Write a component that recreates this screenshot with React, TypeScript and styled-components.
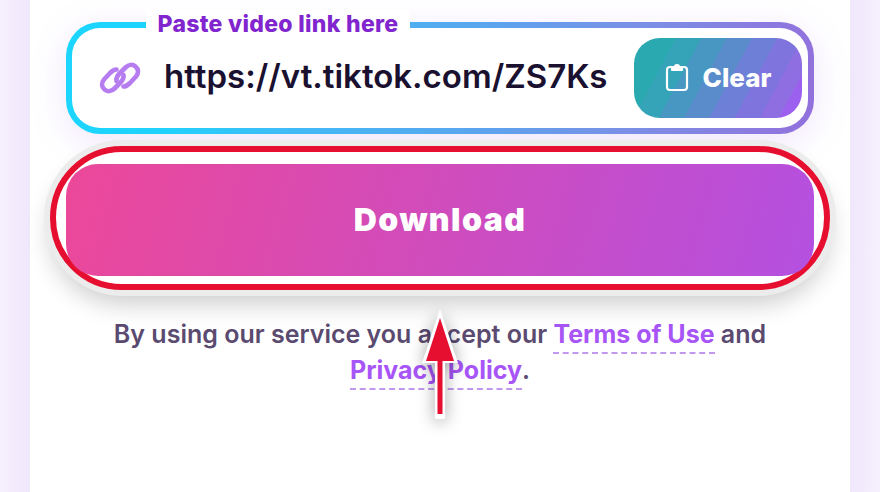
import React from "react";
import styled, { createGlobalStyle } from "styled-components";

const Global = createGlobalStyle`
  html, body { margin: 0; padding: 0; height: 100%; overflow: hidden; }
  body { background: #f4edfe; font-family: Inter, "Noto Sans", sans-serif; }
  * { box-sizing: border-box; }
`;

const Page = styled.div`
  width: 880px;
  height: 492px;
  padding: 0 30px;
  overflow: hidden;
  background: linear-gradient(to right, #f6f0fe 0, #f0e7fc 30px, #f0e7fc 850px, #f6f0fe 880px);
`;

const Panel = styled.main`
  position: relative;
  height: 492px;
  padding: 22px 36px 0;
  background: #fff;
  display: flex;
  flex-direction: column;
`;

const Field = styled.section`
  position: relative;
  height: 112px;
  padding: 10px 6px 10px 27px;
  border: 6px solid transparent;
  border-radius: 34px;
  background:
    linear-gradient(#fff, #fff) padding-box,
    linear-gradient(97deg, #1bd6ff 0%, #1fd2fd 14%, #3fbcf6 30%, #5aa5ee 55%, #7a90e6 75%, #9370dc 100%) border-box;
  box-shadow: 0 8px 36px rgba(170, 110, 235, 0.18);
  display: flex;
  align-items: center;
`;

const Legend = styled.span`
  position: absolute;
  top: -18px;
  left: 74px;
  width: 264px;
  height: 24px;
  background: #fff;
  color: #8125cf;
  font-size: 23px;
  line-height: 28px;
  font-weight: 800;
  letter-spacing: 0.3px;
  text-align: center;
  white-space: nowrap;
`;

const LinkIcon = styled.svg`
  width: 42px;
  height: 34px;
  flex: none;
`;

const Url = styled.div`
  width: 446px;
  margin: 0 0 4px 23px;
  color: #1a1030;
  font-size: 33px;
  line-height: 44px;
  font-weight: 600;
  letter-spacing: 0;
  white-space: nowrap;
`;

const ClearButton = styled.button`
  width: 168px;
  height: 80px;
  margin-left: auto;
  padding: 0 0 2px;
  border: 0;
  border-radius: 26px;
  background: linear-gradient(
    118deg,
    #2ba9b1 0 20%,
    #36a4b8 20% 32%,
    #4897c2 32% 44%,
    #5a8ccc 44% 56%,
    #6d7fd6 56% 68%,
    #7f74de 68% 80%,
    #8f6ee2 80% 89%,
    #9c60ef 89% 100%
  );
  color: #fff;
  font: 800 26px Inter, sans-serif;
  display: flex;
  align-items: center;
  justify-content: center;
  gap: 14px;
`;

const DownloadWrap = styled.div`
  position: relative;
  margin-top: 30px;
  height: 112px;
`;

const Ring = styled.div`
  position: absolute;
  inset: -18px -16px -14px;
  border: 6px solid #e60f30;
  border-radius: 72px;
  background: #fff;
  box-shadow: 0 0 0 6px #ececec, 0 14px 24px rgba(0, 0, 0, 0.2);
`;

const DownloadButton = styled.button`
  position: relative;
  width: 100%;
  height: 112px;
  padding: 0 0 2px;
  border: 0;
  border-radius: 32px;
  background: linear-gradient(105deg, #ec4899 0%, #b450e0 100%);
  color: #fff;
  font: 900 32px Inter, sans-serif;
  letter-spacing: 1.4px;
`;

const Terms = styled.p`
  margin: 40px 0 0;
  color: #5a4a70;
  font-size: 25px;
  line-height: 36px;
  font-weight: 600;
  text-align: center;
`;

const TermsLink = styled.a`
  color: #a855f7;
  font-weight: 700;
  border-bottom: 2px dashed #c198ee;
  padding-bottom: 3px;
`;

const Arrow = styled.svg`
  position: absolute;
  left: 380px;
  top: 305px;
  width: 60px;
  height: 120px;
  filter: drop-shadow(0 3px 8px rgba(0, 0, 0, 0.38));
`;

const chain =
  "M24.5 25.5C27 25.5 29 24 31 22L37 15.5C40 12 39.5 8 36.5 5.5C33.5 3 29.5 3.5 26.5 6.5L20.5 12.5C18 15 17 17.5 17.5 20";

export default function App() {
  return (
    <Page>
      <Global />
      <Panel>
        <Field>
          <Legend>Paste video link here</Legend>
          <LinkIcon viewBox="0 0 42 34" fill="none" stroke="#b67df1" strokeWidth="4.6" strokeLinecap="round">
            <path d={chain} />
            <path d={chain} transform="rotate(180 21 17)" />
          </LinkIcon>
          <Url>https://vt.tiktok.com/ZS7Ks</Url>
          <ClearButton>
            <svg width="24" height="30" viewBox="0 0 24 30" fill="none" stroke="#fff" strokeWidth="2.2" strokeLinejoin="round">
              <rect x="2" y="5" width="20" height="23" rx="3" />
              <path d="M7 5h3a2 2 0 0 1 4 0h3v3H7z" fill="#fff" />
            </svg>
            Clear
          </ClearButton>
        </Field>
        <DownloadWrap>
          <Ring />
          <DownloadButton>Download</DownloadButton>
        </DownloadWrap>
        <Terms>
          By using our service you accept our <TermsLink>Terms of Use</TermsLink> and
          <br />
          <TermsLink>Privacy Policy</TermsLink>.
        </Terms>
        <Arrow viewBox="0 0 60 120">
          <path d="M30 4 L48 58 H35 V112 a2 2 0 0 1 -2 2 H27 a2 2 0 0 1 -2 -2 V58 H12 Z" fill="#fff" />
          <path d="M30 13 L44 56 H32.5 V109 H27.5 V56 H16 Z" fill="#e60f30" />
        </Arrow>
      </Panel>
    </Page>
  );
}
